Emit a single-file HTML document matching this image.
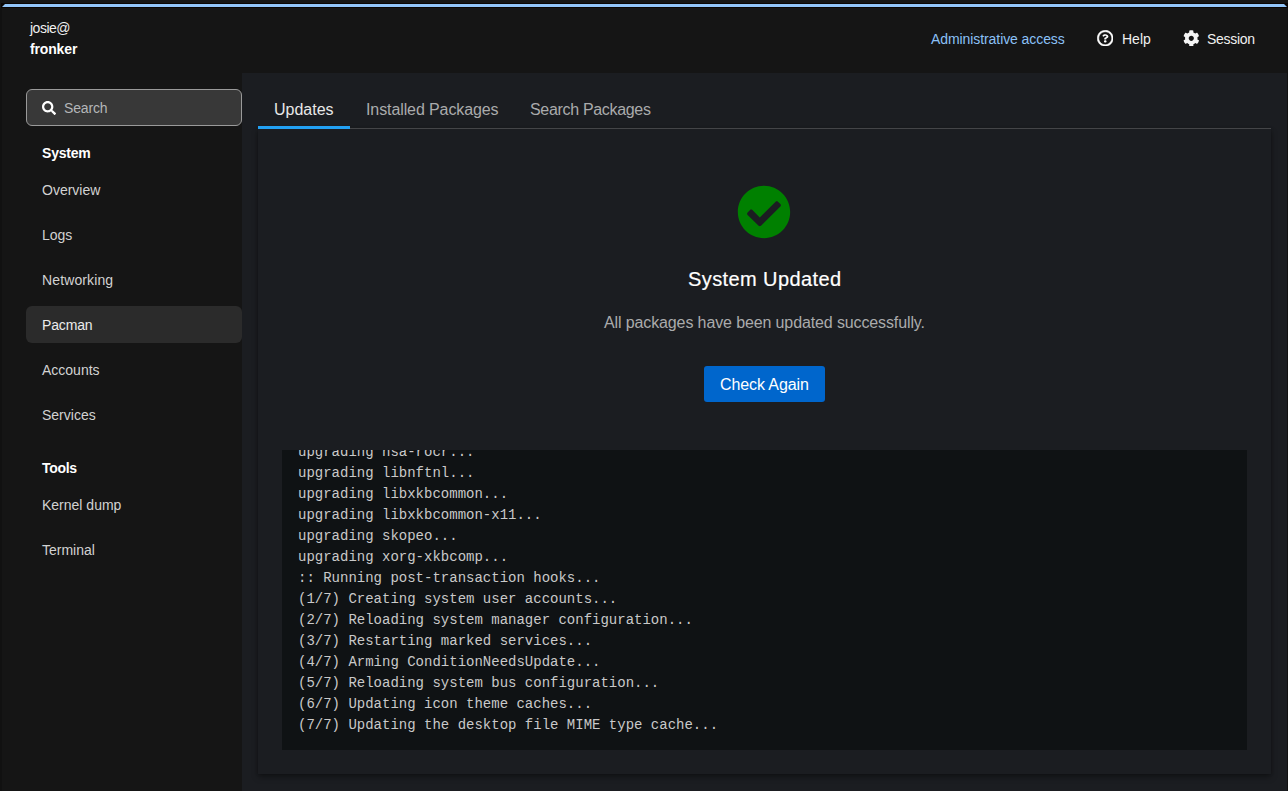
<!DOCTYPE html>
<html lang="en">
<head>
<meta charset="utf-8">
<title>Pacman - fronker</title>
<style>
*{box-sizing:border-box;margin:0;padding:0}
html,body{width:1288px;height:791px;overflow:hidden;background:#151515}
body{position:relative;font-family:"Liberation Sans",sans-serif;font-size:14px;color:#e0e0e0;-webkit-font-smoothing:antialiased}
.abs{position:absolute;white-space:nowrap;line-height:1}
/* window frame */
#frame-top{position:absolute;left:1px;top:3px;width:1287px;height:5px;background:#0a0604}
#frame-bar{position:absolute;left:2px;top:4px;width:1285px;height:3px;background:#92c5f9;clip-path:polygon(3px 0,1282px 0,1285px 3px,0 3px)}
#frame-left{position:absolute;left:0;top:8px;width:2px;height:783px;background:#111}
#frame-right{position:absolute;left:1287px;top:8px;width:1px;height:783px;background:#111}
/* header */
.hd{color:#f0f0f0;font-size:14px}
/* sidebar */
#search{position:absolute;left:26px;top:89px;width:216px;height:37px;border:1px solid #9a9a9a;border-radius:6px;background:#383838}
.nav{color:#d2d2d2;font-size:14px}
.navh{color:#fff;font-size:14px;font-weight:bold}
#sel{position:absolute;left:26px;top:306px;width:216px;height:37px;border-radius:6px;background:#2b2b2b}
/* main */
#main{position:absolute;left:242px;top:73px;width:1045px;height:718px;background:#1b1d21}
#card{position:absolute;left:258px;top:129px;width:1013px;height:645px;background:#1b1d21;box-shadow:0 3px 6px 0 rgba(3,3,3,.36),0 0 3px 0 rgba(3,3,3,.2)}
#tabline{position:absolute;left:258px;top:128px;width:1013px;height:1px;background:#444548}
#tabsel{position:absolute;left:258px;top:126px;width:92px;height:3px;background:#22a0f2}
.tab{font-size:16px;color:#aaabac}
#console{position:absolute;left:282px;top:450px;width:965px;height:300px;background:#0f1214;overflow:hidden}
#console pre{position:absolute;left:16px;top:-8px;font-family:"Liberation Mono",monospace;font-size:14px;line-height:21px;color:#c9c9c9}
#btn{position:absolute;left:704px;top:366px;width:121px;height:36px;border-radius:3px;background:#0066cc}
</style>
</head>
<body>
<div id="frame-top"></div><div id="frame-bar"></div><div id="frame-left"></div><div id="frame-right"></div>

<!-- header -->
<div class="abs hd" id="t-user" style="left:30px;top:20.5px;letter-spacing:-0.5px">josie@</div>
<div class="abs hd" id="t-host" style="left:30px;top:41.5px;letter-spacing:-0.15px;font-weight:bold;color:#fff">fronker</div>
<div class="abs hd" id="t-admin" style="left:931px;top:32px;letter-spacing:-0.08px;color:#8bc1f7">Administrative access</div>
<svg class="abs" id="i-help" style="left:1096.75px;top:29.8px" width="16.5" height="16.5" viewBox="0 0 512 512"><path fill="#fff" stroke="#fff" stroke-width="16" d="M256 8C119.043 8 8 119.083 8 256c0 136.997 111.043 248 248 248s248-111.003 248-248C504 119.083 392.957 8 256 8zm0 448c-110.532 0-200-89.431-200-200 0-110.495 89.472-200 200-200 110.491 0 200 89.471 200 200 0 110.530-89.431 200-200 200z"/><g transform="translate(256 256) scale(.92 .8) translate(-256 -266)"><path fill="#fff" d="M363.244 200.800c0 67.052-72.421 68.084-72.421 92.863V300c0 6.627-5.373 12-12 12h-45.647c-6.627 0-12-5.373-12-12v-8.659c0-35.745 27.100-50.034 47.579-61.516 17.561-9.845 28.324-16.541 28.324-29.579 0-17.246-21.999-28.693-39.784-28.693-23.189 0-33.894 10.977-48.942 29.969-4.057 5.120-11.460 6.071-16.666 2.124l-27.824-21.098c-5.107-3.872-6.251-11.066-2.644-16.363C184.846 131.491 214.940 112 261.794 112c49.071 0 101.450 38.304 101.450 88.800z"/><path fill="#fff" d="M300 390c0 23.159-18.841 42-44 42s-44-18.841-44-42 18.841-42 44-42 44 18.841 44 42z"/></g></svg>
<div class="abs hd" id="t-help" style="left:1122px;top:32px">Help</div>
<svg class="abs" id="i-gear" style="left:1182.7px;top:29.65px" width="16.6" height="16.6" viewBox="0 0 512 512"><path fill="#f5f5f5" d="M487.4 315.700l-42.600-24.600c4.300-23.200 4.300-47 0-70.200l42.600-24.600c4.900-2.800 7.100-8.600 5.500-14-11.100-35.600-30-67.800-54.700-94.600-3.800-4.100-10-5.100-14.800-2.300L380.800 110c-17.900-15.400-38.500-27.300-60.800-35.100V25.800c0-5.600-3.900-10.500-9.400-11.700-36.700-8.200-74.300-7.800-109.200 0-5.500 1.200-9.400 6.100-9.400 11.700V75c-22.200 7.900-42.800 19.800-60.800 35.100L88.700 85.500c-4.900-2.800-11-1.900-14.800 2.300-24.700 26.700-43.600 58.900-54.700 94.600-1.700 5.400.6 11.200 5.500 14L67.300 221c-4.300 23.200-4.300 47 0 70.200l-42.600 24.600c-4.900 2.800-7.100 8.600-5.500 14 11.100 35.600 30 67.800 54.700 94.600 3.800 4.100 10 5.100 14.800 2.300l42.600-24.600c17.900 15.400 38.500 27.300 60.800 35.100v49.200c0 5.600 3.900 10.500 9.400 11.700 36.700 8.200 74.300 7.800 109.200 0 5.500-1.200 9.400-6.100 9.400-11.700v-49.200c22.200-7.900 42.800-19.800 60.800-35.100l42.600 24.600c4.900 2.800 11 1.900 14.800-2.300 24.700-26.700 43.600-58.900 54.700-94.600 1.500-5.500-.7-11.300-5.600-14.100zM256 336c-44.100 0-80-35.900-80-80s35.900-80 80-80 80 35.900 80 80-35.900 80-80 80z"/></svg>
<div class="abs hd" id="t-session" style="left:1207px;top:32px;letter-spacing:-0.3px">Session</div>

<!-- sidebar -->
<div id="search"></div>
<svg class="abs" id="i-search" style="left:42px;top:101px" width="14" height="14" viewBox="0 0 512 512"><path fill="#fff" d="M505 442.700L405.300 343c-4.500-4.500-10.600-7-17-7H372c27.600-35.300 44-79.700 44-128C416 93.100 322.900 0 208 0S0 93.100 0 208s93.100 208 208 208c48.300 0 92.700-16.400 128-44v16.300c0 6.400 2.500 12.500 7 17l99.700 99.700c9.400 9.400 24.600 9.400 33.900 0l28.300-28.300c9.400-9.400 9.400-24.600.1-34zM208 336c-70.700 0-128-57.200-128-128 0-70.700 57.200-128 128-128 70.700 0 128 57.200 128 128 0 70.700-57.200 128-128 128z"/></svg>
<div class="abs" id="t-search" style="left:64px;top:101px;letter-spacing:-0.15px;font-size:14px;color:#b4b6b8">Search</div>

<div class="abs navh" id="n-system" style="left:42px;top:146px;letter-spacing:-0.2px">System</div>
<div class="abs nav" id="n-overview" style="left:42px;top:183px">Overview</div>
<div class="abs nav" id="n-logs" style="left:42px;top:228px">Logs</div>
<div class="abs nav" id="n-networking" style="left:42px;top:273px;letter-spacing:0.12px">Networking</div>
<div id="sel"></div>
<div class="abs nav" id="n-pacman" style="left:42px;top:318px;letter-spacing:-0.15px;color:#ececec">Pacman</div>
<div class="abs nav" id="n-accounts" style="left:42px;top:363px">Accounts</div>
<div class="abs nav" id="n-services" style="left:42px;top:408px">Services</div>
<div class="abs navh" id="n-tools" style="left:42px;top:461px;letter-spacing:-0.3px">Tools</div>
<div class="abs nav" id="n-kdump" style="left:42px;top:498px">Kernel dump</div>
<div class="abs nav" id="n-terminal" style="left:42px;top:543px">Terminal</div>

<!-- main -->
<div id="main"></div>
<div id="card"></div>
<div id="tabline"></div>
<div id="tabsel"></div>
<div class="abs tab" id="tab1" style="left:274px;top:102px;color:#e8e8e8">Updates</div>
<div class="abs tab" id="tab2" style="left:366px;top:102px;letter-spacing:-0.1px">Installed Packages</div>
<div class="abs tab" id="tab3" style="left:530px;top:102px;letter-spacing:-0.32px">Search Packages</div>

<svg class="abs" id="i-check" style="left:737px;top:185px" width="54" height="54" viewBox="0 0 512 512"><path fill="#008000" d="M504 256c0 136.967-111.033 248-248 248S8 392.967 8 256 119.033 8 256 8s248 111.033 248 248zM227.314 387.314l184-184c6.248-6.248 6.248-16.379 0-22.627l-22.627-22.627c-6.248-6.249-16.379-6.249-22.628 0L216 308.118l-70.059-70.059c-6.248-6.248-16.379-6.248-22.628 0l-22.627 22.627c-6.248 6.248-6.248 16.379 0 22.627l104 104c6.249 6.249 16.379 6.249 22.628.001z"/></svg>
<div class="abs" id="t-title" style="left:688px;top:269px;font-size:20px;color:#fff;letter-spacing:0.4px;-webkit-text-stroke:0.2px #fff">System Updated</div>
<div class="abs" id="t-body" style="left:604px;top:315px;font-size:16px;color:#aaabac;letter-spacing:-0.12px">All packages have been updated successfully.</div>
<div id="btn"></div>
<div class="abs" id="t-btn" style="left:720px;top:377px;font-size:16px;color:#fff;letter-spacing:-0.1px">Check Again</div>

<div id="console"><pre>upgrading hsa-rocr...
upgrading libnftnl...
upgrading libxkbcommon...
upgrading libxkbcommon-x11...
upgrading skopeo...
upgrading xorg-xkbcomp...
:: Running post-transaction hooks...
(1/7) Creating system user accounts...
(2/7) Reloading system manager configuration...
(3/7) Restarting marked services...
(4/7) Arming ConditionNeedsUpdate...
(5/7) Reloading system bus configuration...
(6/7) Updating icon theme caches...
(7/7) Updating the desktop file MIME type cache...</pre></div>
</body>
</html>
